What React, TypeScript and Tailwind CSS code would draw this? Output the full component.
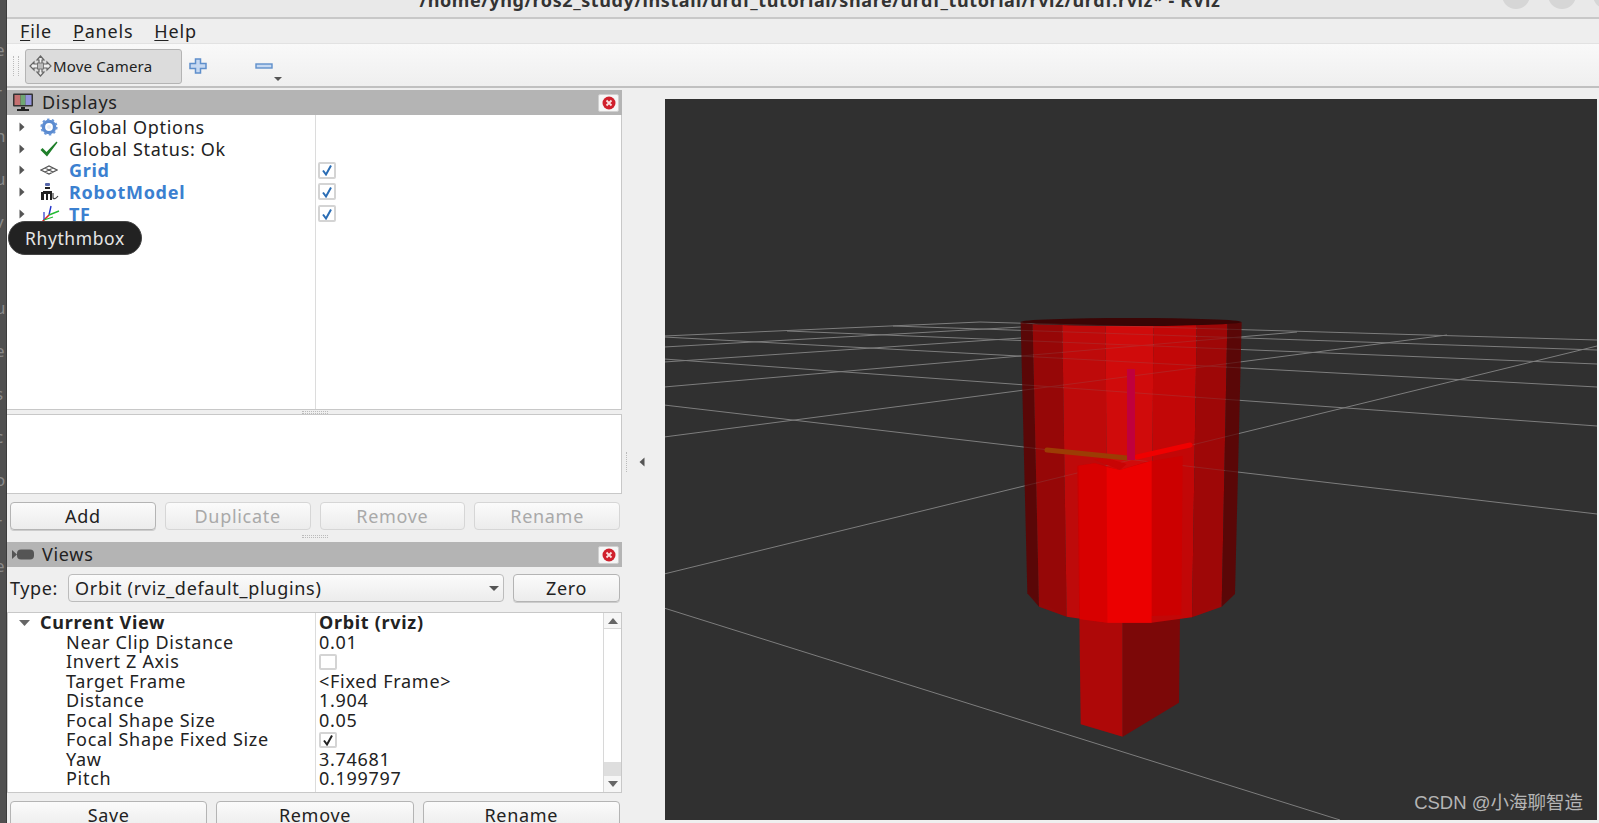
const ui = "font-['Noto_Sans',sans-serif]";

const gridLines: [number, number, number, number][] = [
  [664, 437, 1447, 335],
  [664, 405, 1597, 514],
  [664, 574, 1597, 346],
  [664, 387, 1297, 332],
  [664, 359, 1597, 426],
  [664, 362, 1021, 338],
  [664, 347, 1021, 327],
  [664, 336, 980, 322],
  [664, 337, 1597, 387],
  [787, 331, 1597, 364],
  [893, 326, 1597, 350],
  [980, 322, 1597, 340],
  [664, 608, 1340, 820],
];

// x/y in the 3x crop of the cylinder, converted by p()
const p = (pts: number[][]) => pts.map(([x, y]) => `${980 + x / 3},${290 + y / 3}`).join(" ");

const bands = [
  { c: "#5a0808", q: [[122, 97], [158, 103], [177, 950], [142, 910]] },
  { c: "#960808", q: [[158, 103], [247, 105], [260, 980], [177, 950]] },
  { c: "#bf0a0a", q: [[247, 105], [377, 107], [382, 998], [260, 980]] },
  { c: "#d00c0c", q: [[377, 107], [520, 107], [515, 998], [382, 998]] },
  { c: "#c20808", q: [[520, 107], [650, 104], [636, 982], [515, 998]] },
  { c: "#9e0808", q: [[650, 104], [742, 100], [725, 950], [636, 982]] },
  { c: "#5a0808", q: [[742, 100], [785, 97], [765, 912], [725, 950]] },
];

function Scene() {
  return (
    <svg viewBox="665 99 932 721" className="w-full h-full block">
      <defs>
        <clipPath id="cyl">
          <polygon points={p([[122, 97], [785, 97], [765, 912], [636, 982], [515, 998], [382, 998], [260, 980], [142, 910]])} />
        </clipPath>
      </defs>
      <g id="grid" stroke="#7d7d7d" strokeWidth="1" fill="none">
        {gridLines.map(([a, b, c, d], i) => (
          <line key={i} x1={a} y1={b} x2={c} y2={d} />
        ))}
      </g>

      {/* stem below the cylinder */}
      <polygon points={p([[298, 970], [428, 985], [428, 1340], [302, 1303]])} fill="#ae0808" />
      <polygon points={p([[428, 985], [600, 975], [597, 1238], [428, 1340]])} fill="#7c0808" />

      {/* cylinder */}
      {bands.map((b, i) => (
        <polygon key={i} points={p(b.q)} fill={b.c} />
      ))}
      <ellipse cx="1131" cy="322" rx="110.5" ry="4" fill="#3a0505" />
      <use href="#grid" clipPath="url(#cyl)" opacity="0.2" />

      {/* stem seen through the cylinder */}
      <polygon points={p([[292, 527], [345, 520], [420, 540], [500, 515], [608, 497], [604, 975], [298, 985]])} fill="#cc0000" />
      <polygon points={p([[296, 527], [345, 520], [382, 532], [382, 998], [300, 988]])} fill="#d80000" />
      <polygon points={p([[380, 531], [420, 540], [515, 512], [515, 998], [382, 998]])} fill="#ec0000" />
      <polygon points={p([[340, 508], [380, 504], [440, 522], [420, 540]])} fill="#c80404" />

      {/* axes */}
      <line x1="1047" y1="450" x2="1127" y2="458" stroke="#9c3c04" strokeWidth="5" strokeLinecap="round" />
      <line x1="1137" y1="457" x2="1190" y2="445" stroke="#f00000" strokeWidth="5" strokeLinecap="round" />
      <line x1="1131" y1="369" x2="1131" y2="460" stroke="#c0003c" strokeWidth="8" />
    </svg>
  );
}

function CloseBtn() {
  return (
    <div className="w-[21px] h-[18px] bg-[#f6f6f6] rounded-[2px] border border-[#d0d0d0] flex items-center justify-center">
      <svg width="14" height="14" viewBox="0 0 14 14">
        <circle cx="7" cy="7" r="6.5" fill="#d0202c" />
        <path d="M4.5 4.5l5 5M9.5 4.5l-5 5" stroke="#fbe0e0" strokeWidth="1.8" />
      </svg>
    </div>
  );
}

function PanelBar({ icon, title }: { icon: React.ReactNode; title: string }) {
  return (
    <div className="h-[25px] bg-[#b4b4b4] flex items-center justify-between pr-[3px] shrink-0">
      <div className="flex items-center">
        <div className="w-[35px] flex justify-start pl-[5px]">{icon}</div>
        <span className="text-[18px] tracking-[0.7px] text-[#222]">{title}</span>
      </div>
      <CloseBtn />
    </div>
  );
}

function Arrow() {
  return (
    <svg width="6" height="10" viewBox="0 0 6 10">
      <path d="M0.5 0.5L5.5 5L0.5 9.5Z" fill="#555" />
    </svg>
  );
}

function Check({ color = "#2a6db5", checked = true, h = "h-[17px]" }: { color?: string; checked?: boolean; h?: string }) {
  return (
    <div className={`w-[18px] ${h} bg-white border-2 border-[#d4d4d4] rounded-[2px] flex items-center justify-center`}>
      {checked && (
        <svg width="12" height="12" viewBox="0 0 12 12">
          <path d="M2 6.5L5 10.5L10 1.5" stroke={color} strokeWidth="2" fill="none" />
        </svg>
      )}
    </div>
  );
}

function Gear() {
  return (
    <svg width="18" height="18" viewBox="0 0 18 18">
      <circle cx="9" cy="9" r="5.6" fill="none" stroke="#5b8bd0" strokeWidth="3.4" />
      <circle cx="9" cy="9" r="7.6" fill="none" stroke="#6a97d8" strokeWidth="2" strokeDasharray="2.4 2.4" />
      <circle cx="9" cy="9" r="2" fill="#e4ecf8" />
    </svg>
  );
}

function OkTick() {
  return (
    <svg width="18" height="16" viewBox="0 0 18 16">
      <path d="M0.5 9L2.5 7L6.5 11L16.5 0.5L17.5 1.5L7 15.5Z" fill="#1f7f2a" />
    </svg>
  );
}

function GridIcon() {
  return (
    <svg width="18" height="10" viewBox="0 0 18 10">
      <path d="M1 5L9 1L17 5L9 9ZM5 3L13 7M13 3L5 7" fill="none" stroke="#555" strokeWidth="1.2" />
    </svg>
  );
}

function RobotIcon() {
  return (
    <svg width="19" height="18" viewBox="0 0 19 18">
      <rect x="5" y="0" width="5" height="3" rx="1" fill="#5566aa" />
      <rect x="5" y="4" width="5" height="2" fill="#222" />
      <path d="M1 9H3V8H12V17H10V11H8V17H6V11H4V17H1Z" fill="#222" />
      <path d="M13 10V15Q15 17 18 13" fill="none" stroke="#444" strokeWidth="1.2" />
    </svg>
  );
}

function TfIcon() {
  return (
    <svg width="20" height="18" viewBox="0 0 20 18">
      <path d="M9 10L11 1" stroke="#2233cc" strokeWidth="1.4" />
      <path d="M9 10L19 6" stroke="#22bb33" strokeWidth="1.4" />
      <path d="M9 10L2 17" stroke="#dd2222" strokeWidth="1.6" />
      <path d="M4 7V15" stroke="#2233cc" strokeWidth="1.2" />
      <path d="M4 15L13 12" stroke="#22bb33" strokeWidth="1.2" />
    </svg>
  );
}

function DisplayRow({ icon, label, blue, check }: { icon: React.ReactNode; label: string; blue?: boolean; check?: boolean }) {
  return (
    <div className="h-[21.7px] flex items-center">
      <div className="w-[308px] flex items-center shrink-0">
        <div className="w-[33px] flex justify-end pr-[15px]"><Arrow /></div>
        <div className="w-[29px] flex justify-start">{icon}</div>
        <span className={`text-[18px] leading-[21px] pt-[1px] tracking-[0.7px] whitespace-nowrap ${blue ? "font-bold text-[#3b80d0]" : "text-[#222]"}`}>{label}</span>
      </div>
      {check && <div className="ml-[3px]"><Check /></div>}
    </div>
  );
}

function Btn({ label, disabled, className }: { label: string; disabled?: boolean; className: string }) {
  return (
    <div
      className={`${className} h-[28px] rounded-[4px] border flex items-center justify-center text-[18px] tracking-[0.7px] bg-gradient-to-b from-[#fbfbfb] to-[#ececec] ${
        disabled ? "border-[#d6d6d6] text-[#a9a9a9]" : "border-[#b4b4b4] text-[#222] shadow-[0_1px_0_#ccc]"
      }`}
    >
      {label}
    </div>
  );
}

function Grip() {
  return <div className="w-[26px] h-[3px] mx-auto border-y border-dotted border-[#bbb]" />;
}

const viewRows: [string, string | boolean | null][] = [
  ["Near Clip Distance", "0.01"],
  ["Invert Z Axis", false],
  ["Target Frame", "<Fixed Frame>"],
  ["Distance", "1.904"],
  ["Focal Shape Size", "0.05"],
  ["Focal Shape Fixed Size", true],
  ["Yaw", "3.74681"],
  ["Pitch", "0.199797"],
];

function ViewsTree() {
  return (
    <div className="mt-[10px] h-[181px] border border-[#c8c8c8] bg-white flex overflow-hidden shrink-0">
      <div className="flex-1 relative overflow-hidden">
        <div className="absolute left-[307px] top-0 bottom-0 w-px bg-[#dcdcdc]" />
        <div className="h-[19.5px] flex items-center text-[18px] leading-[19.5px] font-bold tracking-[0.7px] text-[#222]">
          <div className="w-[32px] pl-[11px]">
            <svg width="11" height="6" viewBox="0 0 11 6"><path d="M0 0H11L5.5 6Z" fill="#666" /></svg>
          </div>
          <span className="w-[279px]">Current View</span>
          <span>Orbit (rviz)</span>
        </div>
        {viewRows.map(([name, value]) => (
          <div key={name} className="h-[19.5px] flex items-center text-[18px] leading-[19.5px] tracking-[0.7px] text-[#222] whitespace-nowrap">
            <span className="w-[311px] pl-[58px] shrink-0">{name}</span>
            {typeof value === "boolean" ? (
              <Check color="#222" checked={value} h="h-[16px]" />
            ) : (
              <span>{value}</span>
            )}
          </div>
        ))}
        {/* next row, only its top shows above the fold */}
        <div className="pt-[3px] pl-[58px] text-[18px] leading-[19.5px] tracking-[0.7px] text-[#222] whitespace-nowrap">Focal Point</div>
      </div>
      <div className="w-[18px] border-l border-[#d8d8d8] flex flex-col shrink-0">
        <div className="h-[16px] bg-[#f6f6f6] border-b border-[#d8d8d8] flex items-center justify-center">
          <svg width="10" height="6" viewBox="0 0 10 6"><path d="M5 0L10 6H0Z" fill="#666" /></svg>
        </div>
        <div className="flex-1 bg-white" />
        <div className="h-[14px] bg-[#dedede]" />
        <div className="h-[16px] bg-[#f6f6f6] flex items-center justify-center">
          <svg width="10" height="6" viewBox="0 0 10 6"><path d="M0 0H10L5 6Z" fill="#666" /></svg>
        </div>
      </div>
    </div>
  );
}

export default function App() {
  const slices = ["e", "r", "n", "u", "v", "i", "u", "e", "s", "c", "o", "r", "e"];

  return (
    <div className={`${ui} relative w-[1599px] h-[823px] overflow-hidden flex bg-[#efefef]`}>
      {/* edge of the window behind */}
      <div className="w-[7px] h-full bg-[#505050] border-r border-[#3c3c3c] overflow-hidden pt-[40px] flex flex-col shrink-0">
        {slices.map((s, i) => (
          <div key={i} className="h-[43px] ml-[-5px] text-[17px] leading-[20px] text-[#8a8a8a]">{s}</div>
        ))}
      </div>

      <div className="flex-1 flex flex-col min-w-0">
        {/* title bar */}
        <div className="h-[19px] bg-[#e9e9e9] border-b-2 border-[#c8c8c8] relative overflow-hidden shrink-0">
          <div className="flex justify-center mt-[-11px] ml-[34px]">
            <span className="text-[18px] leading-[23px] font-bold text-[#333] tracking-[0.6px] whitespace-nowrap">
              /home/yhg/ros2_study/install/urdf_tutorial/share/urdf_tutorial/rviz/urdf.rviz* - RViz
            </span>
          </div>
          <div className="absolute top-[-19px] left-[1495px] w-[28px] h-[28px] rounded-full bg-[#d6d6d6]" />
          <div className="absolute top-[-19px] left-[1541px] w-[28px] h-[28px] rounded-full bg-[#d6d6d6]" />
          <div className="absolute top-[-19px] left-[1586px] w-[28px] h-[28px] rounded-full bg-[#d6d6d6]" />
        </div>

        {/* menu */}
        <div className="h-[25px] bg-[#eeeeee] border-b border-[#e2e2e2] flex items-center pl-[13px] gap-[21px] text-[18px] leading-[24px] tracking-[0.8px] text-[#222] shrink-0">
          <span><span className="underline underline-offset-2">F</span>ile</span>
          <span><span className="underline underline-offset-2">P</span>anels</span>
          <span><span className="underline underline-offset-2">H</span>elp</span>
        </div>

        {/* toolbar */}
        <div className="h-[44px] pt-[2px] bg-gradient-to-b from-[#f9f9f9] to-[#efefef] border-b-2 border-[#c0c0c0] flex items-center shrink-0">
          <div className="w-[6px] h-[20px] ml-[6px] border-x border-dotted border-[#bbb]" />
          <div className="ml-[6px] w-[157px] h-[35px] bg-[#dcdcdc] border border-[#b4b4b4] rounded-[3px] flex items-center pl-[3px]">
            <svg width="23" height="22" viewBox="0 0 23 22" className="shrink-0">
              <path d="M11.5 1L15 5H13V9H18V7L22 11L18 15V13H13V17H15L11.5 21L8 17H10V13H5V15L1 11L5 7V9H10V5H8Z" fill="#eee" stroke="#666" strokeWidth="1.2" />
              <rect x="8.5" y="8" width="6" height="6" fill="#bbb" stroke="#666" strokeWidth="0.8" />
            </svg>
            <span className="text-[15px] tracking-[0.2px] text-[#222] ml-[1px] whitespace-nowrap">Move Camera</span>
          </div>
          <svg width="18" height="16" viewBox="0 0 18 16" className="ml-[7px]">
            <path d="M6.5 1H11.5V5.5H17V10.5H11.5V15H6.5V10.5H1V5.5H6.5Z" fill="#c6d9f2" stroke="#5f8fcb" strokeWidth="1.5" />
          </svg>
          <svg width="18" height="6" viewBox="0 0 18 6" className="ml-[48px]">
            <rect x="1" y="1" width="16" height="4" fill="#c6d9f2" stroke="#5f8fcb" strokeWidth="1.4" />
          </svg>
          <svg width="8" height="4" viewBox="0 0 8 4" className="ml-[1px] mt-[25px]">
            <path d="M0 0H8L4 4Z" fill="#555" />
          </svg>
        </div>

        <div className="flex-1 flex min-h-0">
          {/* left docks */}
          <div className="w-[615px] flex flex-col pt-[2px] shrink-0">
            <PanelBar
              title="Displays"
              icon={
                <svg width="22" height="19" viewBox="0 0 22 19">
                  <rect x="1" y="0.5" width="20" height="13" rx="1" fill="#333" />
                  <rect x="2.5" y="2" width="6" height="10" fill="#c57070" />
                  <rect x="8.5" y="2" width="5" height="10" fill="#6fa673" />
                  <rect x="13.5" y="2" width="6" height="10" fill="#9393dc" />
                  <rect x="9" y="14" width="4" height="2" fill="#222" />
                  <rect x="5" y="16" width="12" height="2" fill="#222" />
                </svg>
              }
            />
            <div className="h-[295px] pt-[1px] bg-white border-r border-b border-[#c8c8c8] relative shrink-0">
              <div className="absolute left-[308px] top-0 bottom-0 w-px bg-[#dcdcdc]" />
              <DisplayRow icon={<Gear />} label="Global Options" />
              <DisplayRow icon={<OkTick />} label="Global Status: Ok" />
              <DisplayRow icon={<GridIcon />} label="Grid" blue check />
              <DisplayRow icon={<RobotIcon />} label="RobotModel" blue check />
              <DisplayRow icon={<TfIcon />} label="TF" blue check />
            </div>
            <div className="h-[4px] flex items-center shrink-0"><Grip /></div>
            <div className="h-[80px] bg-white border border-l-0 border-[#c8c8c8] shrink-0" />
            <div className="mt-[8px] flex pl-[3px] pr-[2px] gap-[9px] shrink-0">
              <Btn label="Add" className="flex-1" />
              <Btn label="Duplicate" disabled className="flex-1" />
              <Btn label="Remove" disabled className="flex-1" />
              <Btn label="Rename" disabled className="flex-1" />
            </div>
            <div className="h-[12px] flex items-center shrink-0"><Grip /></div>
            <PanelBar
              title="Views"
              icon={
                <svg width="22" height="11" viewBox="0 0 22 11">
                  <path d="M0 1L5 5.5L0 10Z" fill="#555" />
                  <rect x="5" y="0.5" width="17" height="10" rx="4" fill="#555" />
                </svg>
              }
            />
            <div className="mt-[7px] flex items-center pl-[3px] pr-[2px] shrink-0">
              <span className="w-[58px] text-[18px] tracking-[0.6px] text-[#222]">Type:</span>
              <div className="w-[436px] h-[28px] border border-[#bcbcbc] rounded-[4px] bg-gradient-to-b from-[#fbfbfb] to-[#ececec] flex items-center justify-between pl-[6px] pr-[4px]">
                <span className="text-[18px] tracking-[0.7px] text-[#222] whitespace-nowrap">Orbit (rviz_default_plugins)</span>
                <svg width="10" height="5" viewBox="0 0 10 5"><path d="M0 0H10L5 5Z" fill="#555" /></svg>
              </div>
              <Btn label="Zero" className="ml-[9px] flex-1" />
            </div>
            <ViewsTree />
            <div className="mt-[8px] flex pl-[3px] pr-[2px] gap-[9px] shrink-0">
              <Btn label="Save" className="flex-1" />
              <Btn label="Remove" className="flex-1" />
              <Btn label="Rename" className="flex-1" />
            </div>
          </div>

          {/* dock splitter */}
          <div className="w-[43px] flex items-center pl-[4px] gap-[12px] pt-[12px] shrink-0">
            <div className="w-px h-[20px] border-l border-dotted border-[#bbb]" />
            <svg width="6" height="10" viewBox="0 0 6 10"><path d="M5.5 0.5L0.5 5L5.5 9.5Z" fill="#555" /></svg>
          </div>

          {/* 3D view */}
          <div className="flex-1 pt-[11px] pb-[3px] pr-[2px] min-w-0">
            <div className="relative w-full h-full bg-[#303030]">
              <Scene />
              <div className="absolute right-[14px] bottom-[7px] text-[18.5px] leading-[20px] text-[#b5b5b5] font-['Liberation_Sans','Noto_Sans_CJK_SC',sans-serif] whitespace-nowrap">
                CSDN @小海聊智造
              </div>
            </div>
          </div>
        </div>
      </div>

      {/* dock tooltip */}
      <div className="absolute left-[8px] top-[221px] w-[134px] h-[34px] rounded-full bg-[#222222] border border-[#444] flex items-center pl-[16px] text-[17.5px] tracking-[0.6px] text-[#e6e6e6]">
        Rhythmbox
      </div>
    </div>
  );
}
